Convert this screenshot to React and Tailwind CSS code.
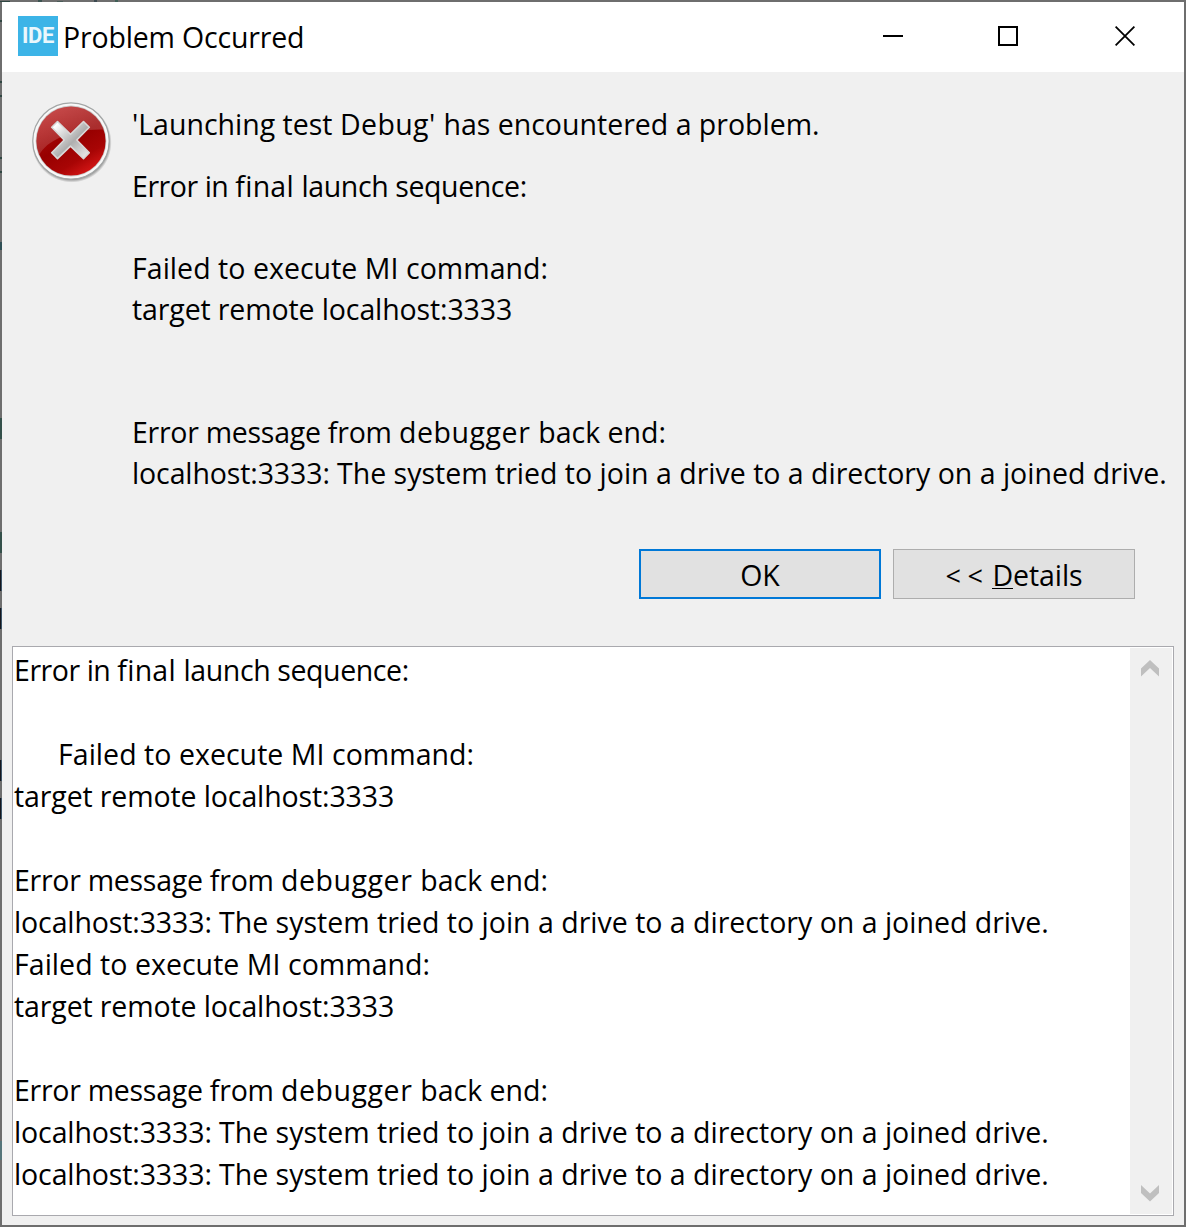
import React from "react";

function Line({ children, className = "" }) {
  return <div className={`whitespace-pre ${className}`}>{children || "\u00a0"}</div>;
}

function Sequence({ className }) {
  return (
    <Line className={className}>
      <span className="tracking-[-0.45px]">Error in </span>
      <span className="tracking-[0.25px]">final </span>
      <span className="tracking-[-0.4px]">launch sequence:</span>
    </Line>
  );
}

function Failed({ className = "" }) {
  return <Line className={`tracking-[0.04px] ${className}`}>Failed to execute MI command:</Line>;
}

function Target() {
  return <Line className="tracking-[-0.12px]">target remote localhost:3333</Line>;
}

function Backend() {
  return (
    <Line>
      <span className="tracking-[-0.27px]">Error message </span>
      <span className="tracking-[-0.2px]">from </span>
      <span className="tracking-[0.55px]">debugger </span>
      back end:
    </Line>
  );
}

function Joined() {
  return (
    <Line>
      <span className="tracking-[-0.12px]">localhost:3333: </span>
      The system tried to join a drive to a directory on a joined drive.
    </Line>
  );
}

function ErrorIcon() {
  return (
    <svg className="block h-[84px] w-[84px]" viewBox="29 99 84 84" aria-hidden="true">
      <defs>
        <linearGradient id="ball" x1="0.2" y1="0" x2="0.8" y2="1">
          <stop offset="0" stopColor="#b81414" />
          <stop offset="0.5" stopColor="#970000" />
          <stop offset="0.75" stopColor="#a80505" />
          <stop offset="1" stopColor="#e01a1a" />
        </linearGradient>
        <linearGradient id="gloss" x1="0.3" y1="0" x2="0.5" y2="1">
          <stop offset="0" stopColor="#fff" stopOpacity="0.25" />
          <stop offset="1" stopColor="#fff" stopOpacity="0.12" />
        </linearGradient>
        <linearGradient id="cross" x1="0" y1="0" x2="1" y2="1">
          <stop offset="0.1" stopColor="#ffffff" />
          <stop offset="0.55" stopColor="#aeaeae" />
          <stop offset="1" stopColor="#f4f4f4" />
        </linearGradient>
        <radialGradient id="shade">
          <stop offset="0.9" stopColor="#000" stopOpacity="0.45" />
          <stop offset="1" stopColor="#000" stopOpacity="0" />
        </radialGradient>
        <clipPath id="disc">
          <circle cx="71" cy="141" r="34.6" />
        </clipPath>
      </defs>
      <circle cx="71.7" cy="142.6" r="40" fill="url(#shade)" />
      <circle cx="71" cy="141" r="38.2" fill="#f8f8f8" stroke="#a3a6a6" strokeWidth="1.2" />
      <circle cx="71" cy="141" r="35.4" fill="#c9c9c9" />
      <circle cx="71" cy="141" r="34.6" fill="url(#ball)" />
      <path clipPath="url(#disc)" fill="url(#gloss)" d="M30 100H112V130C92 128 72 131 57 139C47 144 41 150 38 158H30Z" />
      <path
        fill="url(#cross)"
        stroke="#d8d8d8"
        strokeWidth="1.6"
        strokeLinejoin="round"
        d="M57.5 121.5L70.5 134.2L83.5 121.5L89.3 127.3L76.8 140L89.3 152.8L83.5 158.6L70.5 146.2L57.5 158.6L51.7 152.8L64.2 140L51.7 127.3Z"
      />
    </svg>
  );
}

/* Fragments of the editor behind the dialog that show through its border. */
function BorderTraces() {
  return (
    <div className="pointer-events-none absolute -top-0.5 -left-0.5 h-[1227px] w-0.5">
      <i className="absolute top-5 h-0.5 w-0.5 bg-[#2f4642]" />
      <i className="absolute top-[81px] h-0.5 w-0.5 bg-[#2f4642]" />
      <i className="absolute top-[95px] h-0.5 w-0.5 bg-[#2f4642]" />
      <i className="absolute top-[157px] h-0.5 w-0.5 bg-[#2f4642]" />
      <i className="absolute top-[171px] h-0.5 w-0.5 bg-[#2f4642]" />
      <i className="absolute top-[242px] h-2 w-0.5 bg-[#2f4f55]" />
      <i className="absolute top-[418px] h-[21px] w-0.5 bg-[#34504a]" />
      <i className="absolute top-[532px] h-[21px] w-0.5 bg-[#34504a]" />
      <i className="absolute top-[570px] h-[21px] w-0.5 border-r border-[#3c5468] bg-[#15161c]" />
      <i className="absolute top-[608px] h-[21px] w-0.5 border-r border-[#3c5468] bg-[#15161c]" />
      <i className="absolute top-[760px] h-[21px] w-0.5 border-r border-[#3c5468] bg-[#15161c]" />
      <i className="absolute top-[798px] h-[21px] w-0.5 border-r border-[#3c5468] bg-[#15161c]" />
      <i className="absolute top-[1141px] h-[19px] w-0.5 bg-[#55757a]" />
      <i className="absolute top-px left-0 h-0.5 w-2.5 bg-[#2f4642] [clip-path:inset(0_0_1px_0)]" />
      <i className="absolute top-0 left-[38px] h-0.5 w-1 bg-[#3c5450]" />
      <i className="absolute top-px left-[57px] h-px w-1.5 bg-[#4a5c58]" />
      <i className="absolute top-0 left-[94px] h-0.5 w-[3px] bg-[#3c4a50]" />
      <i className="absolute top-0 left-[115px] h-0.5 w-[3px] bg-[#3f5e56]" />
    </div>
  );
}

export default function App() {
  return (
    <div className="relative flex h-[1227px] w-[1186px] flex-col border-2 border-[#6e6e6e] bg-[#f0f0f0] font-['Open_Sans',sans-serif] text-[28.5px] text-black">
      <header className="flex h-[70px] shrink-0 items-start bg-white">
        <div className="mt-[14px] ml-4 flex h-10 w-10 items-center justify-center bg-[#3cb4e7]">
          <span className="font-['Roboto',sans-serif] text-[22px] leading-none font-bold tracking-[-0.3px] text-white opacity-90">IDE</span>
        </div>
        <h1 className="mt-[15px] ml-[5px] leading-[41px] tracking-[-0.17px]">Problem Occurred</h1>
        <div className="mt-6 mr-[49px] ml-auto flex items-center gap-[95px]">
          <button aria-label="Minimize" className="flex h-5 w-5 items-center">
            <span className="h-0.5 w-5 bg-black" />
          </button>
          <button aria-label="Maximize" className="h-5 w-5 border-2 border-black" />
          <button aria-label="Close" className="ml-0.5 h-5 w-5">
            <svg viewBox="0 0 20 20" className="h-5 w-5" stroke="#000" strokeWidth="1.8">
              <path d="M0.6 0.6L19.4 19.4M19.4 0.6L0.6 19.4" />
            </svg>
          </button>
        </div>
      </header>

      <main className="flex shrink-0 pt-[27px]">
        <div className="w-[130px] shrink-0 pl-[27px]">
          <ErrorIcon />
        </div>
        <div className="pt-[5px] leading-[41px]">
          <Line className="mb-[21px]">
            'Launching test <span className="tracking-[0.4px]">Debug' </span>has encountered a problem.
          </Line>
          <Sequence />
          <Line />
          <Failed />
          <Target />
          <Line />
          <Line />
          <Backend />
          <Joined />
        </div>
      </main>

      <div className="mt-[55px] mr-[49px] flex shrink-0 justify-end gap-3">
        <button className="flex h-[50px] w-[242px] items-center justify-center border-2 border-[#0078d7] bg-[#e1e1e1] pt-[3px]">OK</button>
        <button className="flex h-[50px] w-[242px] items-center justify-center border border-[#adadad] bg-[#e1e1e1] pt-[3px]">
          <span className="mt-0.5 mr-[3px] text-[27px] tracking-[6.5px]">&lt;&lt;</span>
          <span>
            <span className="inline-block h-[33px] border-b border-black leading-[38px]">D</span>
            <span className="tracking-[-0.1px]">etails</span>
          </span>
        </button>
      </div>

      <section className="mx-2.5 mt-[47px] flex h-[570px] shrink-0 justify-between border border-[#a9a9ae] bg-white p-px">
        <div className="pt-px leading-[42px]">
          <Sequence />
          <Line />
          <Failed className="pl-11" />
          <Target />
          <Line />
          <Backend />
          <Joined />
          <Failed />
          <Target />
          <Line />
          <Backend />
          <Joined />
          <Joined />
        </div>
        <div className="flex w-[42px] flex-col items-center justify-between bg-[#f0f0f0] pt-3 pr-0.5 pb-3">
          <svg className="h-[17px] w-[18px]" viewBox="0 0 18 17" fill="#bfbfbf">
            <path d="M9 0L18 8.5V16.5L9 8L0 16.5V8.5Z" />
          </svg>
          <svg className="h-[17px] w-[18px]" viewBox="0 0 18 17" fill="#bfbfbf">
            <path d="M9 16.5L18 8V0L9 8.5L0 0V8Z" />
          </svg>
        </div>
      </section>
      <BorderTraces />
    </div>
  );
}
